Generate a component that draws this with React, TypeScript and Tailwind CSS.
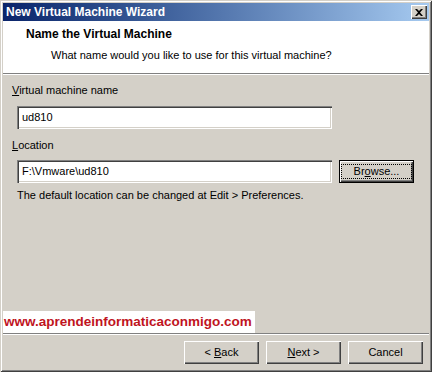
import React from "react";

const font = { fontFamily: '"Liberation Sans", Arial, sans-serif' };

function Btn({ children, className = "", focused = false }: { children: React.ReactNode; className?: string; focused?: boolean }) {
  return (
    <div
      className={`flex items-center justify-center bg-[#d4d0c8] text-[11px] text-black ${className} ${
        focused
          ? "border border-black shadow-[inset_1px_1px_0_#fff,inset_-1px_-1px_0_#404040,inset_-2px_-2px_0_#808080]"
          : "shadow-[inset_1px_1px_0_#fff,inset_-1px_-1px_0_#404040,inset_-2px_-2px_0_#808080]"
      }`}
    >
      {children}
    </div>
  );
}

function Field({ value, className = "" }: { value: string; className?: string }) {
  return (
    <div
      className={`flex items-center bg-white pl-[5px] text-[11px] text-black h-[23px] shadow-[inset_1px_1px_0_#808080,inset_2px_2px_0_#404040,inset_-1px_-1px_0_#fff,inset_-2px_-2px_0_#d4d0c8] ${className}`}
    >
      {value}
    </div>
  );
}

export default function App() {
  return (
    <div style={font} className="w-[432px] h-[372px] bg-[#d4d0c8] p-[3px] flex flex-col shadow-[inset_1px_1px_0_#d4d0c8,inset_-1px_-1px_0_#404040,inset_2px_2px_0_#fff,inset_-2px_-2px_0_#808080] overflow-hidden">
      {/* title bar */}
      <div className="h-[18px] flex items-center justify-between bg-gradient-to-r from-[#0a246a] to-[#a6caf0] pl-[3px] pr-[2px]">
        <span className="text-white font-bold text-[12px] leading-none">New Virtual Machine Wizard</span>
        <div className="w-[16px] h-[14px] bg-[#d4d0c8] flex items-center justify-center shadow-[inset_1px_1px_0_#fff,inset_-1px_-1px_0_#404040,inset_-2px_-2px_0_#808080]">
          <svg width="8" height="7" viewBox="0 0 8 7">
            <path d="M0 0h2l2 2 2-2h2L5 3.5 8 7H6L4 5 2 7H0l3-3.5z" fill="#000" />
          </svg>
        </div>
      </div>
      {/* header */}
      <div className="h-[53px] bg-white flex flex-col pl-[23px] pt-[7px] border-b border-[#808080]">
        <div className="font-bold text-[12px] text-black leading-[13px]">Name the Virtual Machine</div>
        <div className="text-[11px] text-black leading-[13px] mt-[8px] pl-[25px]">What name would you like to use for this virtual machine?</div>
      </div>
      <div className="h-px bg-white" />
      {/* body */}
      <div className="flex-1 flex flex-col pl-[9px] pt-[9px]">
        <div className="text-[11px] leading-[13px] text-black">
          <span className="underline">V</span>irtual machine name
        </div>
        <Field value="ud810" className="w-[315px] ml-[5px] mt-[9px]" />
        <div className="text-[11px] leading-[13px] text-black mt-[10px]">
          <span className="underline">L</span>ocation
        </div>
        <div className="flex items-center mt-[8px] ml-[5px]">
          <Field value="F:\Vmware\ud810" className="w-[315px]" />
          <Btn focused className="w-[75px] h-[23px] ml-[7px]">
            <span className="border border-dotted border-black px-[12px] leading-[13px]">
              Br<span className="underline">o</span>wse...
            </span>
          </Btn>
        </div>
        <div className="text-[11px] leading-[13px] text-black mt-[6px] ml-[5px]">
          The default location can be changed at Edit &gt; Preferences.
        </div>
        <div className="flex-1" />
        <div className="-ml-[9px] w-[252px] h-[22px] bg-white flex items-center pl-[1px]">
          <span className="text-[#c0141e] font-bold text-[13.5px] leading-none">
            www.aprendeinformaticaconmigo.com
          </span>
        </div>
      </div>
      {/* separator */}
      <div className="h-px bg-[#808080]" />
      <div className="h-px bg-white" />
      {/* buttons */}
      <div className="h-[34px] flex items-start justify-end pr-[6px] pt-[6px] gap-[7px]">
        <Btn className="w-[75px] h-[23px]">
          &lt; <span className="underline ml-[3px]">B</span>ack
        </Btn>
        <Btn className="w-[75px] h-[23px]">
          <span className="underline">N</span>ext &gt;
        </Btn>
        <Btn className="w-[75px] h-[23px]">Cancel</Btn>
      </div>
    </div>
  );
}
